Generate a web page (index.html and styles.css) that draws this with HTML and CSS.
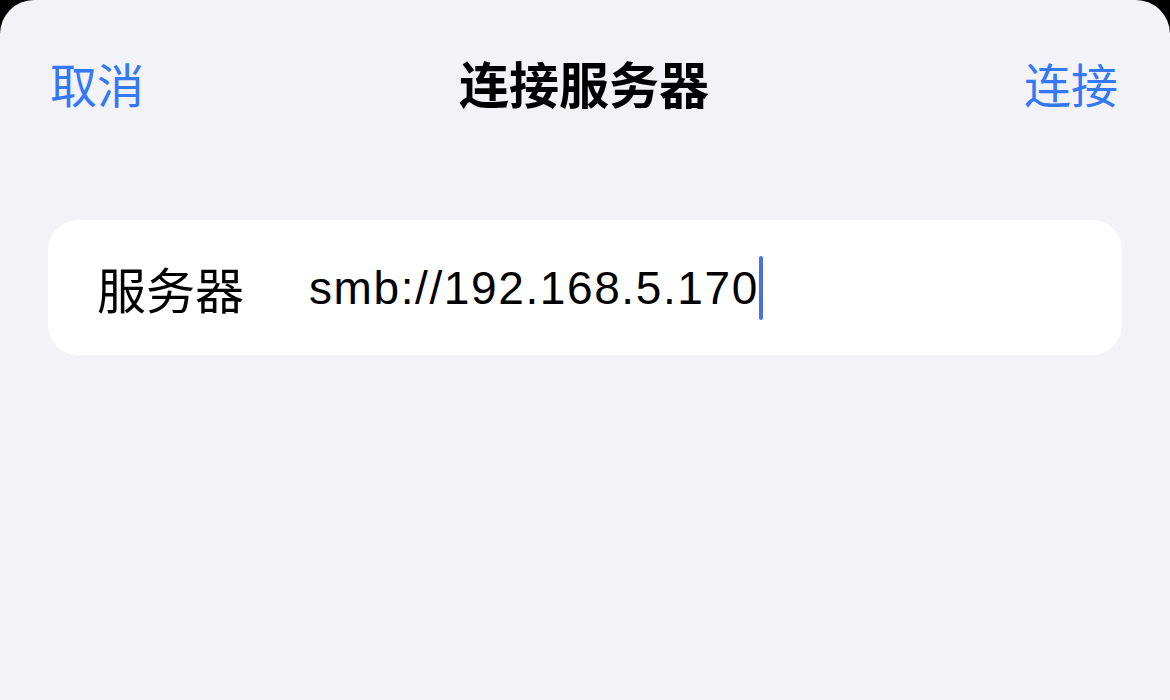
FILE: index.html
```html
<!DOCTYPE html>
<html lang="zh">
<head>
<meta charset="utf-8">
<title>连接服务器</title>
<link rel="stylesheet" href="styles.css">
</head>
<body>
<div class="sheet">
  <header class="nav">
    <span class="nav-btn nav-left">取消</span>
    <span class="nav-title">连接服务器</span>
    <span class="nav-btn nav-right">连接</span>
  </header>
  <div class="card">
    <span class="label">服务器</span>
    <span class="value">smb://192.168.5.170</span><span class="cursor"></span>
  </div>
</div>
</body>
</html>
```
FILE: styles.css
```css
html, body {
  margin: 0;
  padding: 0;
  background: #000;
}
.sheet {
  width: 1170px;
  height: 700px;
  background: #f2f2f7;
  border-radius: 34px 34px 0 0;
  overflow: hidden;
  font-family: "Noto Sans CJK SC", "Noto Sans", sans-serif;
}
.nav {
  height: 164px;
  display: grid;
  grid-template-columns: 1fr auto 1fr;
  align-items: center;
  padding: 0 52px 0 50px;
}
.nav-btn {
  color: #3478f6;
  font-size: 47px;
  font-weight: 400;
}
.nav-left { justify-self: start; }
.nav-right { justify-self: end; }
.nav-title {
  font-size: 50px;
  font-weight: 700;
  color: #000;
}
.card {
  margin: 56px 48px 0 48px;
  height: 135px;
  background: #fff;
  border-radius: 30px;
  display: flex;
  align-items: center;
  padding-left: 49px;
}
.label {
  width: 212px;
  font-size: 49px;
  color: #000;
}
.value {
  font-family: "Liberation Sans", Arial, sans-serif;
  font-size: 46px;
  letter-spacing: 1.6px;
  color: #000;
}
.cursor {
  width: 4px;
  height: 64px;
  background: #4a6fe3;
  border-radius: 2px;
  margin-left: 0;
}
```
